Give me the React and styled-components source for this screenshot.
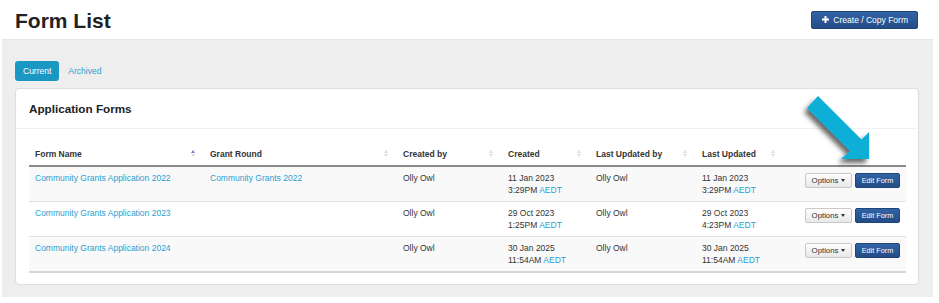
import React from "react";
import styled, { createGlobalStyle } from "styled-components";

const Global = createGlobalStyle`
  html, body { margin: 0; padding: 0; background: #fff; }
  body { font-family: "Liberation Sans", Arial, sans-serif; color: #333; }
  * { box-sizing: border-box; }
`;

const Page = styled.div`
  width: 939px;
  height: 303px;
  padding: 0 6px 0 2px;
`;

const Header = styled.header`
  height: 39px;
  display: flex;
  align-items: center;
  justify-content: space-between;
  padding: 0 15px 0 13px;
`;

const Title = styled.h1`
  margin: 0;
  font-size: 21px;
  font-weight: bold;
  color: #222;
  line-height: 1;
  padding-top: 1px;
`;

const CreateButton = styled.button`
  height: 18px;
  display: flex;
  align-items: center;
  gap: 4px;
  padding: 0 9px 0 10px;
  border: 1px solid #1f4478;
  border-radius: 2px;
  background: linear-gradient(#3263a6, #244c86);
  color: #fff;
  font-family: "Liberation Sans", Arial, sans-serif;
  font-size: 8.5px;
  cursor: pointer;
`;

const Section = styled.section`
  background: #eeeeee;
  height: 258px;
  padding: 21px 14px 13px 13px;
  border-top: 1px solid #e6e6e6;
`;

const Tabs = styled.nav`
  display: flex;
  gap: 1px;
  height: 20px;
  margin-bottom: 7px;
`;

const Tab = styled.a`
  display: flex;
  align-items: center;
  padding: 0 8px;
  border-radius: 3px;
  font-size: 8.5px;
  background: ${(p) => (p.$active ? "#1a97c2" : "transparent")};
  color: ${(p) => (p.$active ? "#fff" : "#2a9fd0")};
  text-decoration: none;
`;

const Panel = styled.div`
  position: relative;
  background: #fff;
  border: 1px solid #dedede;
  border-radius: 4px;
  height: 197px;
`;

const PanelHeading = styled.div`
  height: 40px;
  display: flex;
  align-items: center;
  padding: 0 13px;
  border-bottom: 1px solid #f1f1f1;
  font-size: 11.7px;
  font-weight: bold;
  color: #222;
`;

const PanelBody = styled.div`
  padding: 13px 12px 13px 13px;
`;

const Table = styled.table`
  width: 877px;
  table-layout: fixed;
  border-collapse: collapse;
  font-size: 8.5px;
`;

const Th = styled.th`
  height: 24px;
  padding: 0 9px 0 6px;
  text-align: left;
  font-weight: bold;
  color: #333;
  border-bottom: 2px solid #8a8a8a;
  vertical-align: middle;
`;

const ThInner = styled.div`
  display: flex;
  align-items: center;
  justify-content: space-between;
`;

const Tr = styled.tr`
  background: ${(p) => (p.$odd ? "#f9f9f9" : "#fff")};
  border-top: 1px solid #e2e2e2;
  &:last-child { border-bottom: 2px solid #d6d6d6; }
`;

const Td = styled.td`
  padding: 5px 6px;
  line-height: 12px;
  vertical-align: top;
  text-align: ${(p) => (p.$right ? "right" : "left")};
  height: 34px;
`;

const Link = styled.a`
  color: #2a9fd0;
  text-decoration: none;
`;

const Actions = styled.div`
  display: flex;
  justify-content: flex-end;
  gap: 3px;
  padding-top: 1px;
`;

const OptionsButton = styled.button`
  height: 15px;
  width: 47px;
  display: flex;
  align-items: center;
  justify-content: center;
  gap: 3px;
  padding: 0;
  border: 1px solid #c8c8c8;
  border-radius: 2px;
  background: linear-gradient(#ffffff, #e8e8e8);
  color: #333;
  font-family: "Liberation Sans", Arial, sans-serif;
  font-size: 7.8px;
`;

const EditButton = styled.button`
  height: 15px;
  width: 45px;
  padding: 0;
  border: 1px solid #1f4478;
  border-radius: 2px;
  background: linear-gradient(#3263a6, #244c86);
  color: #fff;
  font-family: "Liberation Sans", Arial, sans-serif;
  font-size: 7.3px;
`;

const Caret = styled.span`
  width: 0;
  height: 0;
  border-left: 2.5px solid transparent;
  border-right: 2.5px solid transparent;
  border-top: 3px solid #333;
`;

const SortWrap = styled.span`
  display: flex;
  flex-direction: column;
  gap: 1px;
`;

const SortTri = styled.span`
  width: 0;
  height: 0;
  border-left: 2px solid transparent;
  border-right: 2px solid transparent;
  ${(p) =>
    p.$up
      ? `border-bottom: 3.5px solid ${p.$active ? "#7b80cc" : "#dcdcdc"};`
      : `border-top: 3.5px solid #dcdcdc;`}
`;

const ArrowSvg = styled.svg`
  position: absolute;
  left: 775px;
  top: -2px;
  width: 100px;
  height: 90px;
  pointer-events: none;
  overflow: visible;
`;

const Sort = ({ active }) => (
  <SortWrap>
    <SortTri $up $active={active} />
    <SortTri />
  </SortWrap>
);

const Plus = () => (
  <svg width="7" height="7" viewBox="0 0 7 7">
    <rect x="2.5" y="0" width="2" height="7" fill="#fff" />
    <rect x="0" y="2.5" width="7" height="2" fill="#fff" />
  </svg>
);

const Arrow = () => (
  <ArrowSvg viewBox="790 85 100 90">
    <defs>
      <filter id="sh" x="-30%" y="-30%" width="160%" height="160%">
        <feDropShadow dx="-3" dy="4" stdDeviation="2.5" floodColor="#000" floodOpacity="0.6" />
      </filter>
    </defs>
    <polygon
      points="817,94 860.5,137.5 868,130 868,157 840,157 849,149 806,106"
      fill="#09afd7"
      filter="url(#sh)"
    />
  </ArrowSvg>
);

const rows = [
  {
    name: "Community Grants Application 2022",
    round: "Community Grants 2022",
    created: ["11 Jan 2023", "3:29PM"],
    updated: ["11 Jan 2023", "3:29PM"],
  },
  {
    name: "Community Grants Application 2023",
    round: "",
    created: ["29 Oct 2023", "1:25PM"],
    updated: ["29 Oct 2023", "4:23PM"],
  },
  {
    name: "Community Grants Application 2024",
    round: "",
    created: ["30 Jan 2025", "11:54AM"],
    updated: ["30 Jan 2025", "11:54AM"],
  },
];

const columns = [
  { label: "Form Name", width: 175, active: true },
  { label: "Grant Round", width: 193 },
  { label: "Created by", width: 105 },
  { label: "Created", width: 88 },
  { label: "Last Updated by", width: 106 },
  { label: "Last Updated", width: 88 },
];

const DateCell = ({ value }) => (
  <Td>
    {value[0]}
    <br />
    {value[1]} <Link href="#">AEDT</Link>
  </Td>
);

export default function App() {
  return (
    <>
      <Global />
      <Page>
        <Header>
          <Title>Form List</Title>
          <CreateButton>
            <Plus />
            Create / Copy Form
          </CreateButton>
        </Header>
        <Section>
          <Tabs>
            <Tab $active href="#">Current</Tab>
            <Tab href="#">Archived</Tab>
          </Tabs>
          <Panel>
            <PanelHeading>Application Forms</PanelHeading>
            <PanelBody>
              <Table>
                <colgroup>
                  {columns.map((c) => (
                    <col key={c.label} style={{ width: c.width }} />
                  ))}
                  <col style={{ width: 122 }} />
                </colgroup>
                <thead>
                  <tr>
                    {columns.map((c) => (
                      <Th key={c.label}>
                        <ThInner>
                          {c.label}
                          <Sort active={c.active} />
                        </ThInner>
                      </Th>
                    ))}
                    <Th />
                  </tr>
                </thead>
                <tbody>
                  {rows.map((r, i) => (
                    <Tr key={r.name} $odd={i % 2 === 0}>
                      <Td>
                        <Link href="#">{r.name}</Link>
                      </Td>
                      <Td>{r.round && <Link href="#">{r.round}</Link>}</Td>
                      <Td>Olly Owl</Td>
                      <DateCell value={r.created} />
                      <Td>Olly Owl</Td>
                      <DateCell value={r.updated} />
                      <Td $right>
                        <Actions>
                          <OptionsButton>
                            Options <Caret />
                          </OptionsButton>
                          <EditButton>Edit Form</EditButton>
                        </Actions>
                      </Td>
                    </Tr>
                  ))}
                </tbody>
              </Table>
            </PanelBody>
            <Arrow />
          </Panel>
        </Section>
      </Page>
    </>
  );
}
